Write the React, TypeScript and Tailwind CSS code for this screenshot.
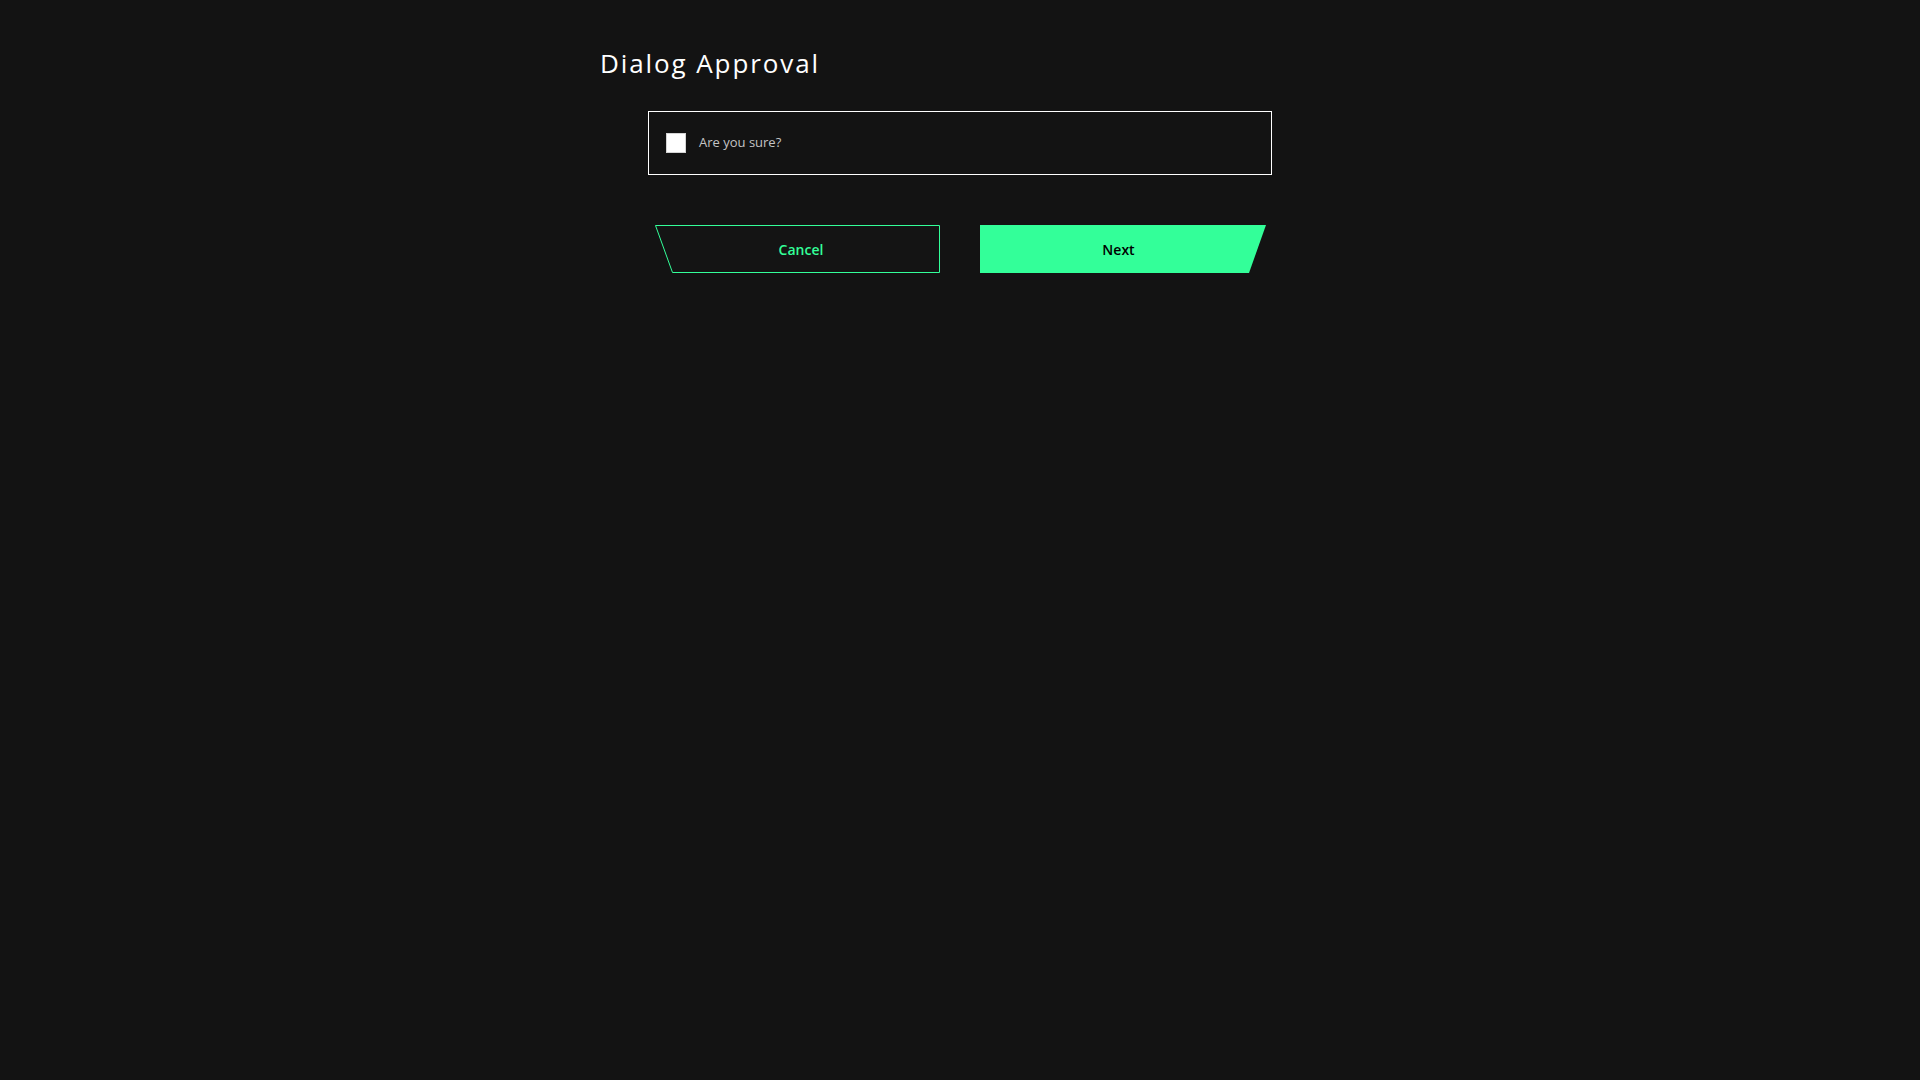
import React from "react";

export default function App() {
  return (
    <div className="min-h-screen w-full bg-[#131313]">
      <div className="mx-auto w-[720px] font-['Open_Sans',sans-serif]">
        <h1 className="pt-[47px] text-[26px] leading-[32px] font-medium tracking-[1.9px] text-white">
          Dialog Approval
        </h1>
        <div className="mx-auto mt-[32px] flex h-[64px] w-[624px] items-center border border-white pl-[17px]">
          <div className="h-[20px] w-[20px] border border-[#d4d4d4] bg-white" />
          <span className="ml-[13px] text-[13px] text-[#c4c4c4]">Are you sure?</span>
        </div>
        <div className="mt-[50px] flex justify-center gap-[40px]">
          <button className="relative flex h-[48px] w-[285px] items-center justify-center pl-[8px] text-[14px] font-semibold text-[#33ff99]">
            <svg className="absolute inset-0" width="285" height="48" viewBox="0 0 285 48">
              <polygon points="0.5,0.5 284.5,0.5 284.5,47.5 17.5,47.5" fill="#141414" stroke="#33ff99" strokeWidth="1" />
            </svg>
            <span className="relative">Cancel</span>
          </button>
          <button className="relative flex h-[48px] w-[286px] items-center justify-center pr-[8px] text-[14px] font-semibold text-black">
            <svg className="absolute inset-0" width="286" height="48" viewBox="0 0 286 48">
              <polygon points="0,0 286,0 269,48 0,48" fill="#33ff99" />
            </svg>
            <span className="relative">Next</span>
          </button>
        </div>
      </div>
    </div>
  );
}
